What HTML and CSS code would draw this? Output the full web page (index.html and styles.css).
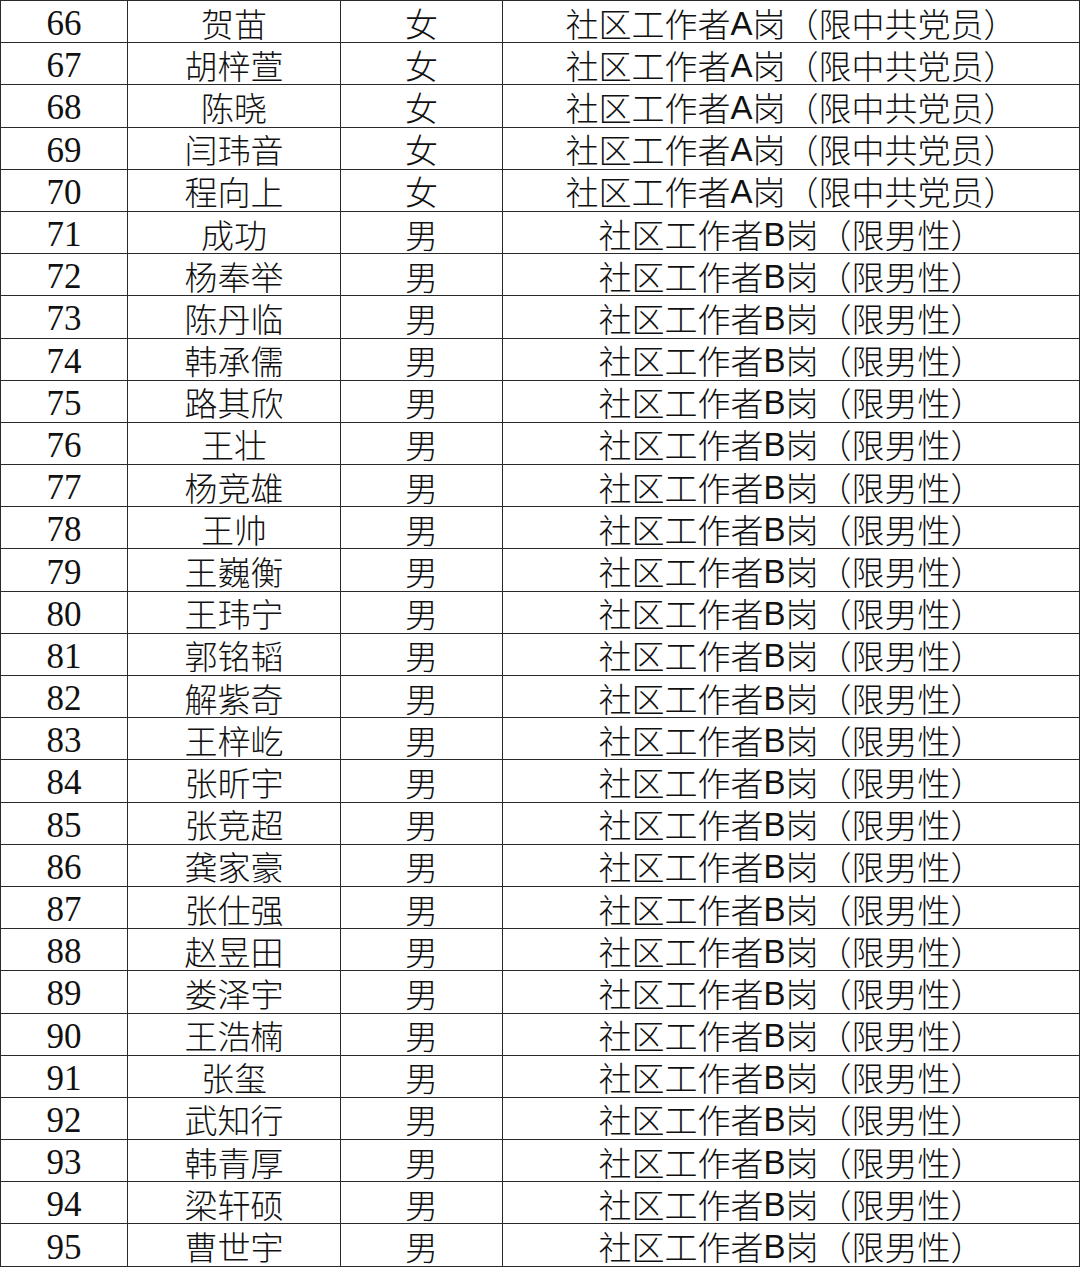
FILE: index.html
```html
<!DOCTYPE html>
<html lang="zh-CN">
<head>
<meta charset="utf-8">
<link rel="stylesheet" href="styles.css">
</head>
<body>
<div class="sheet">
<div class="row"><div class="cell num">66</div><div class="cell">贺苗</div><div class="cell">女</div><div class="cell">社区工作者<span class="lat">A</span>岗（限中共党员）</div></div>
<div class="row"><div class="cell num">67</div><div class="cell">胡梓萱</div><div class="cell">女</div><div class="cell">社区工作者<span class="lat">A</span>岗（限中共党员）</div></div>
<div class="row"><div class="cell num">68</div><div class="cell">陈晓</div><div class="cell">女</div><div class="cell">社区工作者<span class="lat">A</span>岗（限中共党员）</div></div>
<div class="row"><div class="cell num">69</div><div class="cell">闫玮音</div><div class="cell">女</div><div class="cell">社区工作者<span class="lat">A</span>岗（限中共党员）</div></div>
<div class="row"><div class="cell num">70</div><div class="cell">程向上</div><div class="cell">女</div><div class="cell">社区工作者<span class="lat">A</span>岗（限中共党员）</div></div>
<div class="row"><div class="cell num">71</div><div class="cell">成功</div><div class="cell">男</div><div class="cell">社区工作者<span class="lat">B</span>岗（限男性）</div></div>
<div class="row"><div class="cell num">72</div><div class="cell">杨奉举</div><div class="cell">男</div><div class="cell">社区工作者<span class="lat">B</span>岗（限男性）</div></div>
<div class="row"><div class="cell num">73</div><div class="cell">陈丹临</div><div class="cell">男</div><div class="cell">社区工作者<span class="lat">B</span>岗（限男性）</div></div>
<div class="row"><div class="cell num">74</div><div class="cell">韩承儒</div><div class="cell">男</div><div class="cell">社区工作者<span class="lat">B</span>岗（限男性）</div></div>
<div class="row"><div class="cell num">75</div><div class="cell">路其欣</div><div class="cell">男</div><div class="cell">社区工作者<span class="lat">B</span>岗（限男性）</div></div>
<div class="row"><div class="cell num">76</div><div class="cell">王壮</div><div class="cell">男</div><div class="cell">社区工作者<span class="lat">B</span>岗（限男性）</div></div>
<div class="row"><div class="cell num">77</div><div class="cell">杨竞雄</div><div class="cell">男</div><div class="cell">社区工作者<span class="lat">B</span>岗（限男性）</div></div>
<div class="row"><div class="cell num">78</div><div class="cell">王帅</div><div class="cell">男</div><div class="cell">社区工作者<span class="lat">B</span>岗（限男性）</div></div>
<div class="row"><div class="cell num">79</div><div class="cell">王巍衡</div><div class="cell">男</div><div class="cell">社区工作者<span class="lat">B</span>岗（限男性）</div></div>
<div class="row"><div class="cell num">80</div><div class="cell">王玮宁</div><div class="cell">男</div><div class="cell">社区工作者<span class="lat">B</span>岗（限男性）</div></div>
<div class="row"><div class="cell num">81</div><div class="cell">郭铭韬</div><div class="cell">男</div><div class="cell">社区工作者<span class="lat">B</span>岗（限男性）</div></div>
<div class="row"><div class="cell num">82</div><div class="cell">解紫奇</div><div class="cell">男</div><div class="cell">社区工作者<span class="lat">B</span>岗（限男性）</div></div>
<div class="row"><div class="cell num">83</div><div class="cell">王梓屹</div><div class="cell">男</div><div class="cell">社区工作者<span class="lat">B</span>岗（限男性）</div></div>
<div class="row"><div class="cell num">84</div><div class="cell">张昕宇</div><div class="cell">男</div><div class="cell">社区工作者<span class="lat">B</span>岗（限男性）</div></div>
<div class="row"><div class="cell num">85</div><div class="cell">张竞超</div><div class="cell">男</div><div class="cell">社区工作者<span class="lat">B</span>岗（限男性）</div></div>
<div class="row"><div class="cell num">86</div><div class="cell">龚家豪</div><div class="cell">男</div><div class="cell">社区工作者<span class="lat">B</span>岗（限男性）</div></div>
<div class="row"><div class="cell num">87</div><div class="cell">张仕强</div><div class="cell">男</div><div class="cell">社区工作者<span class="lat">B</span>岗（限男性）</div></div>
<div class="row"><div class="cell num">88</div><div class="cell">赵昱田</div><div class="cell">男</div><div class="cell">社区工作者<span class="lat">B</span>岗（限男性）</div></div>
<div class="row"><div class="cell num">89</div><div class="cell">娄泽宇</div><div class="cell">男</div><div class="cell">社区工作者<span class="lat">B</span>岗（限男性）</div></div>
<div class="row"><div class="cell num">90</div><div class="cell">王浩楠</div><div class="cell">男</div><div class="cell">社区工作者<span class="lat">B</span>岗（限男性）</div></div>
<div class="row"><div class="cell num">91</div><div class="cell">张玺</div><div class="cell">男</div><div class="cell">社区工作者<span class="lat">B</span>岗（限男性）</div></div>
<div class="row"><div class="cell num">92</div><div class="cell">武知行</div><div class="cell">男</div><div class="cell">社区工作者<span class="lat">B</span>岗（限男性）</div></div>
<div class="row"><div class="cell num">93</div><div class="cell">韩青厚</div><div class="cell">男</div><div class="cell">社区工作者<span class="lat">B</span>岗（限男性）</div></div>
<div class="row"><div class="cell num">94</div><div class="cell">梁轩硕</div><div class="cell">男</div><div class="cell">社区工作者<span class="lat">B</span>岗（限男性）</div></div>
<div class="row"><div class="cell num">95</div><div class="cell">曹世宇</div><div class="cell">男</div><div class="cell">社区工作者<span class="lat">B</span>岗（限男性）</div></div>
</div>
</body>
</html>
```
FILE: styles.css
```css
html, body {
  margin: 0;
  padding: 0;
  background: #fff;
}
.sheet {
  width: 1079px;
  border-top: 1.5px solid #2a2a2a;
  border-left: 1.5px solid #2a2a2a;
  font-family: "Noto Sans CJK SC", sans-serif;
  font-weight: 300;
  font-size: 33px;
  color: #111;
}
.row {
  display: grid;
  grid-template-columns: 127px 213px 162px 1fr;
  height: 42.2px;
}
.cell {
  box-sizing: border-box;
  border-right: 1.5px solid #2a2a2a;
  border-bottom: 1.5px solid #2a2a2a;
  display: flex;
  align-items: center;
  justify-content: center;
  padding-top: 3px;
  line-height: 33px;
  white-space: nowrap;
}
.num {
  font-family: "Liberation Serif", serif;
  font-weight: 400;
  font-size: 35px;
  padding-top: 4px;
}
.lat {
  font-family: "Liberation Sans", sans-serif;
  font-weight: 400;
}
```
